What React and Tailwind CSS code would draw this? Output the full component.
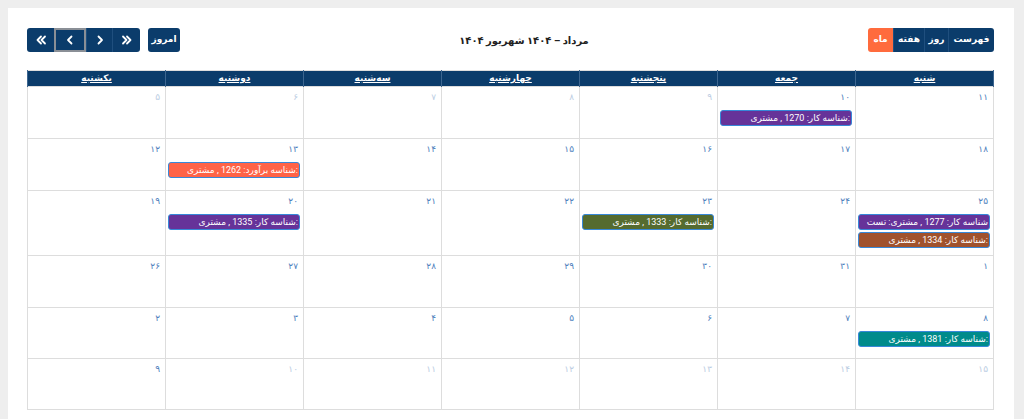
import React from 'react';

const DAYS = ['شنبه', 'جمعه', 'پنجشنبه', 'چهارشنبه', 'سه‌شنبه', 'دوشنبه', 'یکشنبه'];

// هر سطر از راست به چپ؛ off = روز خارج از بازه
const WEEKS = [
    { h: 'h-[52px]', days: [['۱۱'], ['۱۰'], ['۹', 1], ['۸', 1], ['۷', 1], ['۶', 1], ['۵', 1]] },
    { h: 'h-[52px]', days: [['۱۸'], ['۱۷'], ['۱۶'], ['۱۵'], ['۱۴'], ['۱۳'], ['۱۲']] },
    { h: 'h-[65px]', days: [['۲۵'], ['۲۴'], ['۲۳'], ['۲۲'], ['۲۱'], ['۲۰'], ['۱۹']] },
    { h: 'h-[52px]', days: [['۱'], ['۳۱'], ['۳۰'], ['۲۹'], ['۲۸'], ['۲۷'], ['۲۶']] },
    { h: 'h-[51px]', days: [['۸'], ['۷'], ['۶'], ['۵'], ['۴'], ['۳'], ['۲']] },
    { h: 'h-[51px]', days: [['۱۵', 1], ['۱۴', 1], ['۱۳', 1], ['۱۲', 1], ['۱۱', 1], ['۱۰', 1], ['۹']] },
];

const EVENTS = {
    '0-1': [{ bg: 'bg-[#663399]', text: 'شناسه کار: 1270 , مشتری: ' }],
    '1-5': [{ bg: 'bg-[#ff6347]', text: 'شناسه برآورد: 1262 , مشتری: ' }],
    '2-0': [
        { bg: 'bg-[#663399]', text: 'شناسه کار: 1277 , مشتری: تست' },
        { bg: 'bg-[#a0522d]', text: 'شناسه کار: 1334 , مشتری: ' },
    ],
    '2-2': [{ bg: 'bg-[#556b2f]', text: 'شناسه کار: 1333 , مشتری: ' }],
    '2-5': [{ bg: 'bg-[#663399]', text: 'شناسه کار: 1335 , مشتری: ' }],
    '4-0': [{ bg: 'bg-[#008b8b]', text: 'شناسه کار: 1381 , مشتری: ' }],
};

const Btn = ({ children, className = '' }) => (
    <button className={`h-[24px] bg-[#0b3c6b] text-white text-[9px] font-bold flex items-center justify-center ${className}`}>
        {children}
    </button>
);

const Chevron = ({ dir = 'left', double = false }) => (
    <svg width="12" height="12" viewBox="0 0 12 12" fill="none" stroke="white" strokeWidth="1.8" strokeLinecap="round" strokeLinejoin="round">
        {double ? (
            dir === 'left'
                ? <><path d="M6 2.5 L2.5 6 L6 9.5" /><path d="M10 2.5 L6.5 6 L10 9.5" /></>
                : <><path d="M2 2.5 L5.5 6 L2 9.5" /><path d="M6 2.5 L9.5 6 L6 9.5" /></>
        ) : (
            <path d={dir === 'left' ? 'M7.5 2.5 L4 6 L7.5 9.5' : 'M4.5 2.5 L8 6 L4.5 9.5'} />
        )}
    </svg>
);

const App = () => {
    return (
        <div className="min-h-screen bg-[#eeeeee] pt-[8px] pl-[8px] pr-[10px]" style={{ fontFamily: 'Roboto, "DejaVu Sans", sans-serif' }}>
            <div dir="rtl" className="bg-white min-h-[411px] pt-[20px] pr-[20px] pl-[19px] pb-[10px]">

                {/* نوار ابزار */}
                <div className="flex items-center justify-between h-[24px]">
                    <div className="flex rounded-[3px] overflow-hidden">
                        <Btn className="w-[46px] border-l border-[#1f4f7e]">فهرست</Btn>
                        <Btn className="w-[24px] border-l border-[#1f4f7e]">روز</Btn>
                        <Btn className="w-[31px] border-l border-[#1f4f7e]">هفته</Btn>
                        <Btn className="w-[25px] !bg-[#ff6b3d]">ماه</Btn>
                    </div>

                    <h2 className="text-[10px] font-bold text-[#222]">مرداد – ۱۴۰۴ شهریور ۱۴۰۴</h2>

                    <div className="flex items-center gap-[8px]">
                        <Btn className="w-[32px] rounded-[3px]">امروز</Btn>
                        <div className="flex rounded-[3px] overflow-hidden">
                            <Btn className="w-[28px] border-l border-[#1f4f7e]"><Chevron dir="right" double /></Btn>
                            <Btn className="w-[26px] border-l border-[#1f4f7e]"><Chevron dir="right" /></Btn>
                            <Btn className="w-[32px] border-2 border-[#8a8f96]"><Chevron dir="left" /></Btn>
                            <Btn className="w-[27px]"><Chevron dir="left" double /></Btn>
                        </div>
                    </div>
                </div>

                {/* تقویم */}
                <table className="w-full table-fixed border-collapse mt-[18px] border border-[#dddddd]">
                    <thead>
                        <tr className="bg-[#0b3c6b] h-[16px]">
                            {DAYS.map((d) => (
                                <th key={d} className="border-x border-[#3d6690] text-white text-[9px] font-bold underline leading-[15px]">{d}</th>
                            ))}
                        </tr>
                    </thead>
                    <tbody>
                        {WEEKS.map((w, ri) => (
                            <tr key={ri} className={w.h}>
                                {w.days.map(([n, off], ci) => (
                                    <td key={ci} className="border border-[#dddddd] align-top p-0">
                                        <div className={`text-[9px] leading-[12px] pt-[4px] pr-[5px] h-[23px] ${off ? 'text-[#bccde3]' : 'text-[#4f81bd]'}`}>{n}</div>
                                        <div className="flex flex-col gap-[2px]">
                                            {(EVENTS[`${ri}-${ci}`] || []).map((ev, k) => (
                                                <div key={k} className={`${ev.bg} h-[16px] ml-[2px] mr-[3px] rounded-[3px] border border-[#3788d8] overflow-hidden whitespace-nowrap text-white text-[9px] leading-[14px] pr-[1px]`}>
                                                    <span dir="ltr">{ev.text}</span>
                                                </div>
                                            ))}
                                        </div>
                                    </td>
                                ))}
                            </tr>
                        ))}
                    </tbody>
                </table>
            </div>
        </div>
    );
};

export default App;
